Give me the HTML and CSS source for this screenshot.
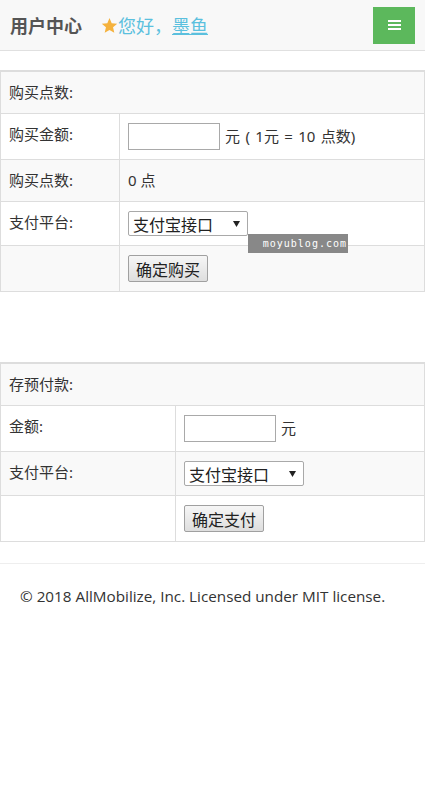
FILE: index.html
```html
<!DOCTYPE html>
<html lang="zh-CN">
  <head>
    <meta charset="UTF-8" />
    <meta name="viewport" content="width=device-width, initial-scale=1.0" />
    <title>用户中心</title>
    <link rel="stylesheet" href="styles.css">
  </head>
  <body>
    <header class="topbar">
      <span class="brand">用户中心</span>
      <span class="hello">
        <svg class="star" width="17" height="17" viewBox="0 0 24 24"><path d="M12 1.5l3.1 7.2 7.8.7-5.9 5.2 1.8 7.7L12 18.3l-6.8 4 1.8-7.7-5.9-5.2 7.8-.7z" fill="#f5b23d"/></svg>您好，<a href="#" class="user">墨鱼</a>
      </span>
      <button class="menu-btn" type="button" aria-label="菜单">
        <span></span><span></span><span></span>
      </button>
    </header>

    <main class="content">
      <table class="tbl tbl-points">
        <tr><td colspan="2">购买点数:</td></tr>
        <tr>
          <td class="lbl">购买金额:</td>
          <td><div class="field"><input type="text" class="txt" /> <span class="rate">元 ( 1元 = 10 点数)</span></div></td>
        </tr>
        <tr><td class="lbl">购买点数:</td><td>0 点</td></tr>
        <tr>
          <td class="lbl">支付平台:</td>
          <td><div class="field"><select class="sel"><option>支付宝接口</option></select></div></td>
        </tr>
        <tr><td class="lbl"></td><td><div class="field"><button class="btn" type="button">确定购买</button></div></td></tr>
      </table>

      <table class="tbl tbl-pay">
        <tr><td colspan="2">存预付款:</td></tr>
        <tr>
          <td class="lbl">金额:</td>
          <td><div class="field"><input type="text" class="txt" /> 元</div></td>
        </tr>
        <tr>
          <td class="lbl">支付平台:</td>
          <td><div class="field"><select class="sel"><option>支付宝接口</option></select></div></td>
        </tr>
        <tr><td class="lbl"></td><td><div class="field"><button class="btn" type="button">确定支付</button></div></td></tr>
      </table>
    </main>

    <footer class="footer">
      <p>© 2018 AllMobilize, Inc. Licensed under MIT license.</p>
    </footer>

    <div class="watermark">moyublog.com</div>
  </body>
</html>
```

FILE: styles.css
```css
body {
  margin: 0;
  font-family: "Noto Sans", "Noto Sans CJK SC", sans-serif;
  font-size: 15px;
  color: #333;
  background: #fff;
  position: relative;
}
.topbar {
  height: 51px;
  display: flex;
  align-items: center;
  padding: 0 10px;
  background: #f8f8f8;
  border-bottom: 1px solid #e0e0e0;
  box-sizing: border-box;
}
.brand {
  font-size: 18px;
  font-weight: bold;
  color: #555;
}
.hello {
  display: flex;
  align-items: center;
  margin-left: 19px;
  font-size: 18px;
  color: #5bc0de;
}
.user {
  color: #5bc0de;
  text-decoration: underline;
  text-decoration-thickness: 1px;
}
.menu-btn {
  margin-left: auto;
  width: 42px;
  height: 37px;
  background: #5cb85c;
  border: none;
  border-radius: 0;
  display: flex;
  flex-direction: column;
  align-items: center;
  justify-content: center;
  gap: 2.3px;
  padding: 0;
}
.menu-btn span {
  display: block;
  width: 13px;
  height: 2px;
  background: #fff;
}

.content {
  padding-top: 19px;
}
.tbl {
  width: 100%;
  border-collapse: collapse;
  border: 1px solid #ddd;
  border-top: 2px solid #ddd;
  margin-bottom: 70px;
}
.tbl td {
  border: 1px solid #ddd;
  padding: 9px 8px;
  line-height: 23px;
  vertical-align: top;
}
.tbl tr:nth-child(odd) td {
  background: #f9f9f9;
}
.tbl-points .lbl {
  width: 102px;
}
.tbl-pay .lbl {
  width: 158px;
}
.tbl-pay {
  margin-bottom: 21px;
}
.field {
  display: flex;
  align-items: center;
  gap: 4px;
  white-space: nowrap;
}
.rate {
  word-spacing: 1.5px;
}
.txt {
  width: 92px;
  height: 27px;
  box-sizing: border-box;
  border: 1px solid #a9a9a9;
  margin: 0 1px 0 0;
}
.sel {
  appearance: none;
  width: 120px;
  height: 25px;
  box-sizing: border-box;
  border: 1px solid #a9a9a9;
  border-radius: 2px;
  padding: 0 0 0 4px;
  font-family: "Noto Sans CJK SC", sans-serif;
  font-size: 16px;
  color: #222;
  background: #fff url("data:image/svg+xml;utf8,<svg xmlns='http://www.w3.org/2000/svg' width='7' height='6'><path d='M0 0h7L3.5 6z' fill='%23222'/></svg>") no-repeat right 7px center;
}
.btn {
  height: 27px;
  padding: 0 7px;
  font-family: "Noto Sans CJK SC", sans-serif;
  font-size: 16px;
  color: #222;
  border: 1px solid #a0a0a0;
  border-radius: 2px;
  background: linear-gradient(#f6f6f6, #dedede);
}

.footer {
  border-top: 1px solid #eee;
  padding: 14px 20px;
}
.footer p {
  margin: 8px 0;
  font-family: "Open Sans", sans-serif;
  font-size: 15.25px;
  color: #333;
}

.watermark {
  position: absolute;
  left: 248px;
  top: 234px;
  width: 100px;
  height: 19px;
  background: #888;
  color: #fff;
  font-family: "DejaVu Sans Mono", monospace;
  font-size: 10px;
  letter-spacing: 1px;
  line-height: 19px;
  text-align: right;
  padding-right: 1px;
  box-sizing: border-box;
}
```
